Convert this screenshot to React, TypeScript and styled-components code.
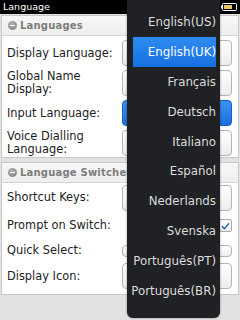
import styled, { createGlobalStyle } from "styled-components";

const GlobalStyle = createGlobalStyle`
  html, body {
    margin: 0;
    padding: 0;
  }
  body {
    font-family: "DejaVu Sans", "Liberation Sans", sans-serif;
  }
`;

const Screen = styled.div`
  position: relative;
  width: 240px;
  height: 320px;
  overflow: hidden;
  background: #e2e2e2;
  display: flex;
  flex-direction: column;
`;

const TitleBar = styled.div`
  height: 14px;
  background: #000000;
  color: #ffffff;
  font-size: 9.5px;
  line-height: 14px;
  padding: 0 3px;
  display: flex;
  align-items: center;
  justify-content: space-between;
`;

const Content = styled.div`
  display: flex;
  flex-direction: column;
  gap: 4px;
  padding: 1px 1px 0 1px;
`;

const Panel = styled.section`
  background: #ffffff;
  border: 1px solid #c9c9c9;
  display: flex;
  flex-direction: column;
`;

const PanelHeader = styled.div`
  height: 19px;
  background: linear-gradient(#f7f7f7, #eeeeee);
  border-bottom: 1px solid #d4d4d4;
  display: flex;
  align-items: center;
  padding-left: 6px;
  gap: 3px;
  font-size: 10px;
  font-weight: 700;
  color: #7d7d7d;
  letter-spacing: 0.2px;
  white-space: nowrap;
`;

const Collapse = styled.span`
  width: 9px;
  height: 9px;
  border-radius: 50%;
  background: radial-gradient(circle at 40% 35%, #b5b5b5, #7a7a7a);
  display: flex;
  align-items: center;
  justify-content: center;
  &::after {
    content: "";
    width: 5px;
    height: 1.5px;
    background: #ffffff;
  }
`;

const Rows = styled.div<{ $top: number; $gap: number; $bottom: number }>`
  display: flex;
  flex-direction: column;
  gap: ${(p) => p.$gap}px;
  padding: ${(p) => p.$top}px 6px ${(p) => p.$bottom}px 5px;
`;

const Row = styled.div<{ $h: number }>`
  height: ${(p) => p.$h}px;
  display: flex;
  align-items: center;
  justify-content: space-between;
`;

const Label = styled.div`
  font-size: 11.4px;
  line-height: 13px;
  color: #1c1c1c;
  width: 114px;
`;

const Choice = styled.div<{ $active?: boolean; $h?: number }>`
  width: 110px;
  height: ${(p) => p.$h ?? 26}px;
  box-sizing: border-box;
  border-radius: 4px;
  border: 1px solid ${(p) => (p.$active ? "#1560c8" : "#b4b4b4")};
  background: ${(p) =>
    p.$active
      ? "linear-gradient(#3d93f0, #1a6fdc)"
      : "linear-gradient(#ffffff, #ececec)"};
`;

const Check = styled.div`
  width: 11px;
  height: 11px;
  border: 1px solid #a8a8a8;
  border-radius: 2px;
  background: linear-gradient(#ffffff, #eeeeee);
  display: flex;
  align-items: center;
  justify-content: center;
`;

const Popup = styled.div`
  position: absolute;
  top: 0;
  left: 127px;
  width: 93px;
  height: 318px;
  box-sizing: border-box;
  background: #1f2124;
  border-radius: 0 0 6px 6px;
  box-shadow: 0 0 2px rgba(0, 0, 0, 0.5);
  padding-top: 7px;
  display: flex;
  flex-direction: column;
`;

const Item = styled.div<{ $selected?: boolean }>`
  height: 29.9px;
  margin: 0 4px 0 6px;
  padding-right: 0;
  display: flex;
  align-items: center;
  justify-content: flex-end;
  font-size: 11.8px;
  white-space: nowrap;
  color: ${(p) => (p.$selected ? "#ffffff" : "#dcdcdc")};
  background: ${(p) =>
    p.$selected ? "linear-gradient(#2f8cf2, #1670e0)" : "transparent"};
`;

const Battery = () => (
  <svg width="16" height="8" viewBox="0 0 16 8">
    <rect x="0" y="2.5" width="1.5" height="3" fill="#ffffff" />
    <rect x="1.5" y="0.5" width="14" height="7" rx="1" fill="none" stroke="#ffffff" />
    <rect x="3" y="2" width="8" height="4" fill="#e8c860" />
  </svg>
);

const languages = [
  "English(US)",
  "English(UK)",
  "Français",
  "Deutsch",
  "Italiano",
  "Español",
  "Nederlands",
  "Svenska",
  "Português(PT)",
  "Português(BR)",
];

export default function App() {
  return (
    <Screen>
      <GlobalStyle />
      <TitleBar>
        <span>Language</span>
        <Battery />
      </TitleBar>
      <Content>
        <Panel>
          <PanelHeader>
            <Collapse />
            Languages
          </PanelHeader>
          <Rows $top={4} $gap={4} $bottom={1}>
            <Row $h={26}>
              <Label>Display Language:</Label>
              <Choice />
            </Row>
            <Row $h={26}>
              <Label>Global Name Display:</Label>
              <Choice />
            </Row>
            <Row $h={26}>
              <Label>Input Language:</Label>
              <Choice $active />
            </Row>
            <Row $h={26}>
              <Label>Voice Dialling Language:</Label>
              <Choice />
            </Row>
          </Rows>
        </Panel>
        <Panel>
          <PanelHeader>
            <Collapse />
            Language Switcher
          </PanelHeader>
          <Rows $top={1} $gap={0} $bottom={3}>
            <Row $h={27}>
              <Label>Shortcut Keys:</Label>
              <Choice />
            </Row>
            <Row $h={29}>
              <Label>Prompt on Switch:</Label>
              <Check>
                <svg width="9" height="8" viewBox="0 0 9 8">
                  <path d="M1 4.2 L3.4 6.6 L8 1.2" fill="none" stroke="#2a62b8" strokeWidth="1.4" />
                </svg>
              </Check>
            </Row>
            <Row $h={21}>
              <Label>Quick Select:</Label>
              <Choice $h={12} />
            </Row>
            <Row $h={30}>
              <Label>Display Icon:</Label>
              <Choice />
            </Row>
          </Rows>
        </Panel>
      </Content>
      <Popup>
        {languages.map((l) => (
          <Item key={l} $selected={l === "English(UK)"}>
            {l}
          </Item>
        ))}
      </Popup>
    </Screen>
  );
}
